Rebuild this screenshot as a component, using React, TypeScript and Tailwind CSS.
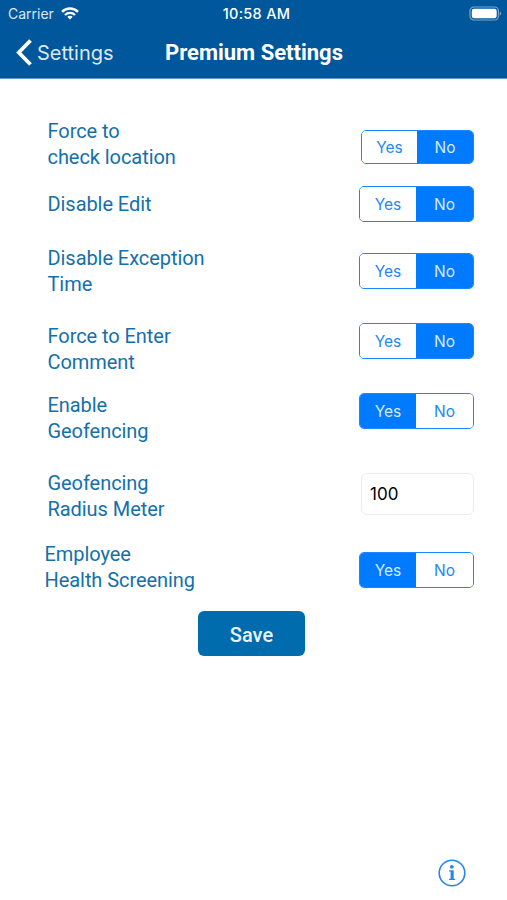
import { useState } from 'react';
import clsx from 'clsx';

type Answer = 'Yes' | 'No';

interface SegmentedProps {
  initial: Answer;
  className?: string;
}

const Segmented = ({ initial, className }: SegmentedProps) => {
  const [value, setValue] = useState<Answer>(initial);

  return (
    <div
      className={clsx(
        'grid shrink-0 grid-cols-[49.5%_50.5%] overflow-hidden rounded-[5px] border-[1.5px] border-[#1a86ff] font-[Inter,sans-serif] text-[15.5px]',
        className
      )}
    >
      {(['Yes', 'No'] as Answer[]).map((option) => (
        <button
          key={option}
          onClick={() => setValue(option)}
          className={clsx(
            'flex items-center justify-center pt-[2px]',
            value === option ? 'bg-[#007aff] text-[#d9ebff]' : 'bg-white text-[#2187f5]'
          )}
        >
          {option}
        </button>
      ))}
    </div>
  );
};

interface RowProps {
  lines: string[];
  className: string;
  children: React.ReactNode;
}

const Row = ({ lines, className, children }: RowProps) => (
  <div className={clsx('flex justify-between pr-[33px]', className)}>
    <div className="text-[20px] leading-[26px] tracking-[-0.06px] text-[#1470ab]">
      {lines.map((line) => (
        <div key={line} className="whitespace-nowrap">
          {line}
        </div>
      ))}
    </div>
    {children}
  </div>
);

const StatusBar = () => (
  <div className="grid h-[28px] grid-cols-3 items-center pb-[2px] pl-[8px] pr-[5px] font-[Inter,sans-serif] text-[14px] text-[#dce9f5]">
    <div className="flex items-center gap-[7px]">
      <span>Carrier</span>
      <svg width="18" height="13" viewBox="0 0 18 13" fill="none" stroke="#fff" strokeWidth="2.4">
        <path d="M1 4.8C5.5.4 12.500.4 17 4.800" />
        <path d="M4 8C6.800 5.200 11.200 5.200 14 8" />
        <path d="M9 12.500 6.300 9.800C7.800 8.400 10.200 8.400 11.700 9.800Z" fill="#fff" stroke="none" />
      </svg>
    </div>
    <span className="whitespace-nowrap pl-[3px] pt-[2px] text-center text-[14.5px] font-medium tracking-[0.3px] text-white">
      10:58 AM
    </span>
    <svg className="justify-self-end" width="33" height="15" viewBox="0 0 33 15">
      <rect x="1" y="1" width="28.500" height="13" rx="4" fill="none" stroke="#78a7d1" strokeWidth="1.200" />
      <rect x="2.800" y="2.800" width="24.900" height="9.400" rx="2.200" fill="#fff" />
      <path d="M30.800 5.500c1.800.8 1.800 3.200 0 4z" fill="#78a7d1" />
    </svg>
  </div>
);

const App = () => {
  const [radius, setRadius] = useState('100');

  return (
    <div className="flex h-[900px] w-[507px] flex-col bg-white font-[Roboto,sans-serif]">
      <header className="h-[79px] border-b border-[#5c9bd0] bg-[#00579c]">
        <StatusBar />
        <div className="grid h-[49px] grid-cols-[165px_1fr_165px] items-center text-white">
          <button className="flex items-center pl-[16px]">
            <svg width="17" height="27" viewBox="0 0 17 27" fill="none" stroke="#fff" strokeWidth="3.800">
              <path d="M14.500 1.500 2.800 13.500 14.500 25.500" />
            </svg>
            <span className="pl-[4px] font-[Inter,sans-serif] text-[20px] text-[#dce9f5]">Settings</span>
          </button>
          <h1 className="whitespace-nowrap text-center text-[22px] font-bold">Premium Settings</h1>
        </div>
      </header>

      <main className="flex flex-col pt-[39px]">
        <Row lines={['Force to', 'check location']} className="pl-[47.5px]">
          <Segmented initial="No" className="mt-[12px] h-[34px] w-[113px]" />
        </Row>
        <Row lines={['Disable Edit']} className="mt-[16px] items-center pl-[47.5px]">
          <Segmented initial="No" className="h-[36px] w-[115px]" />
        </Row>
        <Row lines={['Disable Exception', 'Time']} className="mt-[23px] pl-[47.5px]">
          <Segmented initial="No" className="mt-[8px] h-[36px] w-[115px]" />
        </Row>
        <Row lines={['Force to Enter', 'Comment']} className="mt-[26px] pl-[47.5px]">
          <Segmented initial="No" className="h-[36px] w-[115px]" />
        </Row>
        <Row lines={['Enable', 'Geofencing']} className="mt-[17px] pl-[47.5px]">
          <Segmented initial="Yes" className="mt-[1px] h-[36px] w-[115px]" />
        </Row>
        <Row lines={['Geofencing', 'Radius Meter']} className="mt-[26px] pl-[47.5px]">
          <input
            value={radius}
            onChange={(e) => setRadius(e.target.value)}
            className="mt-[3px] h-[42px] w-[113px] rounded-[6px] border border-[#ececec] px-[8px] font-[Inter,sans-serif] text-[17px] text-black outline-none"
          />
        </Row>
        <Row lines={['Employee', 'Health Screening']} className="mt-[19px] pl-[44.5px]">
          <Segmented initial="Yes" className="mt-[11px] h-[36px] w-[115px]" />
        </Row>

        <button className="ml-[198px] mt-[18px] h-[45px] w-[107px] rounded-[6px] bg-[#006bad] pt-[2px] text-[20px] font-medium text-[#e8f3fb]">
          Save
        </button>
      </main>

      <footer className="mt-auto flex justify-end pb-[13px] pr-[41px]">
        <svg width="28" height="28" viewBox="0 0 28 28" fill="#2187f5">
          <circle cx="14" cy="14" r="12.800" fill="none" stroke="#2187f5" strokeWidth="1.600" />
          <circle cx="13.800" cy="7.800" r="1.900" />
          <path d="M11 11.300h4.700v8.400h1.500v1.300h-6.200v-1.300h1.600v-7.100h-1.600z" />
        </svg>
      </footer>
    </div>
  );
};

export default App;
